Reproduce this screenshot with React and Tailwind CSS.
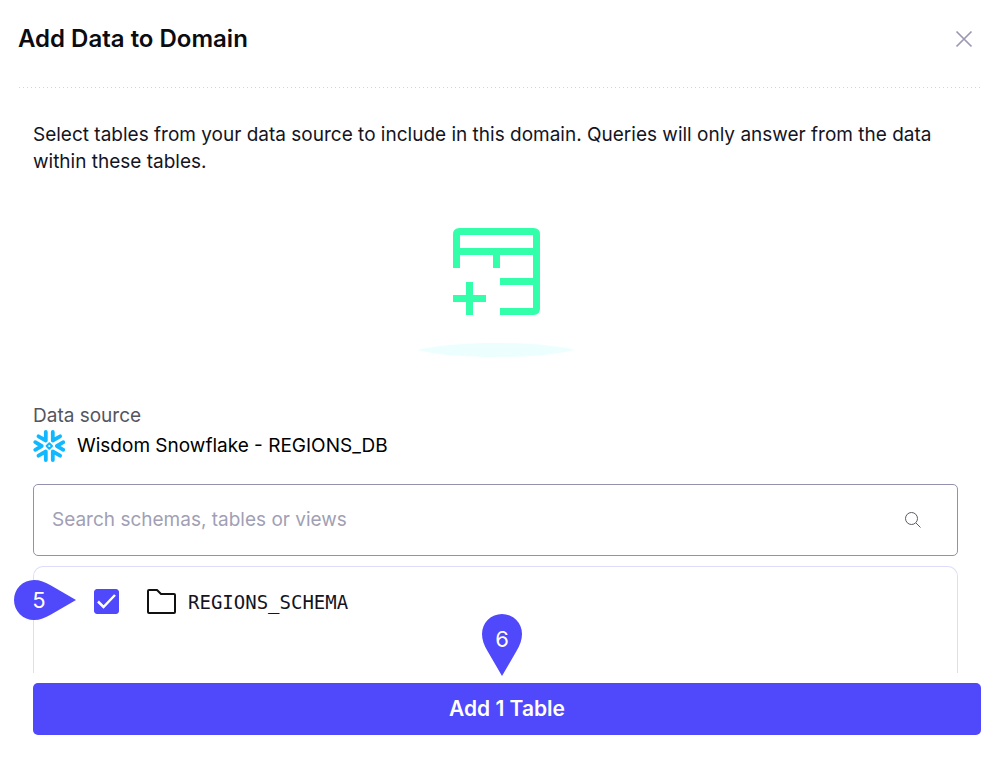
import { useState } from "react";

function TableArt() {
  return (
    <svg
      width="162"
      height="130"
      viewBox="0 0 162 130"
      fill="none"
      aria-hidden="true"
    >
      <g stroke="#33ffaa" strokeWidth="7">
        <path d="M41.500 40V6.500Q41.500 3.500 44.500 3.500H118.500Q121.500 3.500 121.500 6.500V80.500Q121.500 83.500 118.500 83.500H85" />
        <path d="M41.500 23.500H121M81.500 23.500V40M85 53.500H121" />
        <path d="M38 70.500H71M54.500 54V87" />
      </g>
      <path
        d="M2 122C24 117 50 115 81 115S138 117 160 122C138 127 112 129 81 129S24 127 2 122Z"
        fill="#ecfffe"
      />
    </svg>
  );
}

function SnowflakeLogo() {
  return (
    <svg
      width="32"
      height="32"
      viewBox="0 0 32 32"
      fill="none"
      stroke="#11b8ff"
      strokeWidth="3.800"
      strokeLinecap="round"
      strokeLinejoin="round"
      aria-hidden="true"
    >
      <path d="M12.800 2V10.500L5.500 6.300" />
      <path d="M19.800 2V10.500L27.100 6.300" />
      <path d="M12.800 30V21.500L5.500 25.700" />
      <path d="M19.800 30V21.500L27.100 25.700" />
      <path d="M2.300 12.200L8.700 16L2.300 19.800" />
      <path d="M30.300 12.200L23.900 16L30.300 19.800" />
      <path
        d="M16.300 13.300L19 16L16.300 18.700L13.600 16Z"
        strokeWidth="2"
      />
    </svg>
  );
}

function Pin({ number, direction, className }) {
  const right = direction === "right";

  return (
    <div
      className={`pointer-events-none absolute flex text-[22px] leading-6 text-white ${className}`}
    >
      <svg
        width={right ? 62 : 40}
        height={right ? 40 : 62}
        viewBox={right ? "0 0 62 40" : "0 0 40 62"}
        className="fill-[#5048fb]"
        aria-hidden="true"
      >
        {right ? (
          <path d="M62 20L37 34.500C31 38 26 40 20 40A20 20 0 0 1 20 0C26 0 31 2 37 5.500Z" />
        ) : (
          <path d="M20 62L5.500 37C2 31 0 26 0 20A20 20 0 0 1 40 20C40 26 38 31 34.500 37Z" />
        )}
      </svg>
      <span
        className={
          right
            ? "absolute inset-y-2 left-0 w-[50px] text-center"
            : "absolute inset-x-0 top-[13px] text-center"
        }
      >
        {number}
      </span>
    </div>
  );
}

export default function App() {
  const [search, setSearch] = useState("");
  const [checked, setChecked] = useState(true);

  return (
    <main className="bg-white pb-9 font-['Inter',sans-serif] text-[19px] text-[#14141f]">
      <header className="mx-[18px]">
        <div className="flex items-center justify-between pt-6 pb-[33px]">
          <h1 className="text-2xl leading-[30px] font-semibold text-[#0b0b10]">
            Add Data to Domain
          </h1>
          <button type="button" aria-label="Close" className="mr-2 p-px">
            <svg
              width="18"
              height="18"
              viewBox="0 0 18 18"
              stroke="#9a98b4"
              strokeWidth="1.700"
              aria-hidden="true"
            >
              <path d="M1.500 1.500L16.500 16.500M16.500 1.500L1.500 16.500" />
            </svg>
          </button>
        </div>
        <div className="h-px bg-[repeating-linear-gradient(to_right,transparent_0_1px,#d3d3e0_1px_2px,transparent_2px_4px)]" />
      </header>

      <div className="mr-[42px] ml-[33px]">
        <p className="pt-[33px] leading-[27px]">
          Select tables from your data source to include in this domain. Queries
          will only answer from the data within these tables.
        </p>

        <div className="mt-[53px] flex justify-center">
          <TableArt />
        </div>

        <div className="mt-[46px] leading-6 text-[#55555f]">Data source</div>
        <div className="mt-[2px] flex items-center gap-3 leading-8 text-black">
          <SnowflakeLogo />
          <span>Wisdom Snowflake - REGIONS_DB</span>
        </div>

        <div className="mt-[22px] flex h-[72px] items-center rounded-[5px] border border-[#9491ad] pr-9 pl-[18px]">
          <input
            type="text"
            aria-label="Search schemas, tables or views"
            placeholder="Search schemas, tables or views"
            value={search}
            onChange={(e) => setSearch(e.target.value)}
            className="min-w-0 flex-1 bg-transparent outline-none placeholder:text-[#a19fb5]"
          />
          <svg
            width="17"
            height="17"
            viewBox="0 0 17 17"
            fill="none"
            stroke="#5c5a62"
            aria-hidden="true"
          >
            <circle cx="7.500" cy="6.500" r="6" />
            <path d="M12 11L16.500 15.500" />
          </svg>
        </div>

        <div className="relative mt-[10px] h-[107px] rounded-t-[10px] border border-b-0 border-[#dedcfb] pt-[22px] pl-[60px]">
          <label className="flex items-center">
            <span className="relative flex">
              <input
                type="checkbox"
                checked={checked}
                onChange={(e) => setChecked(e.target.checked)}
                className="peer size-[25px] appearance-none rounded-[3px] border border-[#5048fb] checked:bg-[#5048fb]"
              />
              <svg
                viewBox="0 0 25 25"
                fill="none"
                stroke="white"
                strokeWidth="2.500"
                className="pointer-events-none absolute inset-0 hidden peer-checked:block"
                aria-hidden="true"
              >
                <path d="M4 12.500L9.500 18L21 6" />
              </svg>
            </span>
            <svg
              width="29"
              height="25"
              viewBox="0 0 29 25"
              fill="none"
              stroke="#111"
              strokeWidth="2"
              strokeLinejoin="round"
              className="mr-3 ml-7"
              aria-hidden="true"
            >
              <path d="M1 2Q1 1 2 1H10L14 5H27Q28 5 28 6V23Q28 24 27 24H2Q1 24 1 23Z" />
            </svg>
            <span className="font-['DejaVu_Sans_Mono',monospace] leading-6">
              REGIONS_SCHEMA
            </span>
          </label>
          <Pin number={5} direction="right" className="top-[13px] -left-5" />
        </div>
      </div>

      <div className="relative mt-[10px] mr-[19px] ml-[33px]">
        <button
          type="button"
          className="h-[52px] w-full rounded-[5px] bg-[#5048fb] text-[21px] font-semibold text-white"
        >
          Add {checked ? 1 : 0} Table
        </button>
        <Pin
          number={6}
          direction="down"
          className="bottom-full left-1/2 mb-[7px] -ml-[25px]"
        />
      </div>
    </main>
  );
}
